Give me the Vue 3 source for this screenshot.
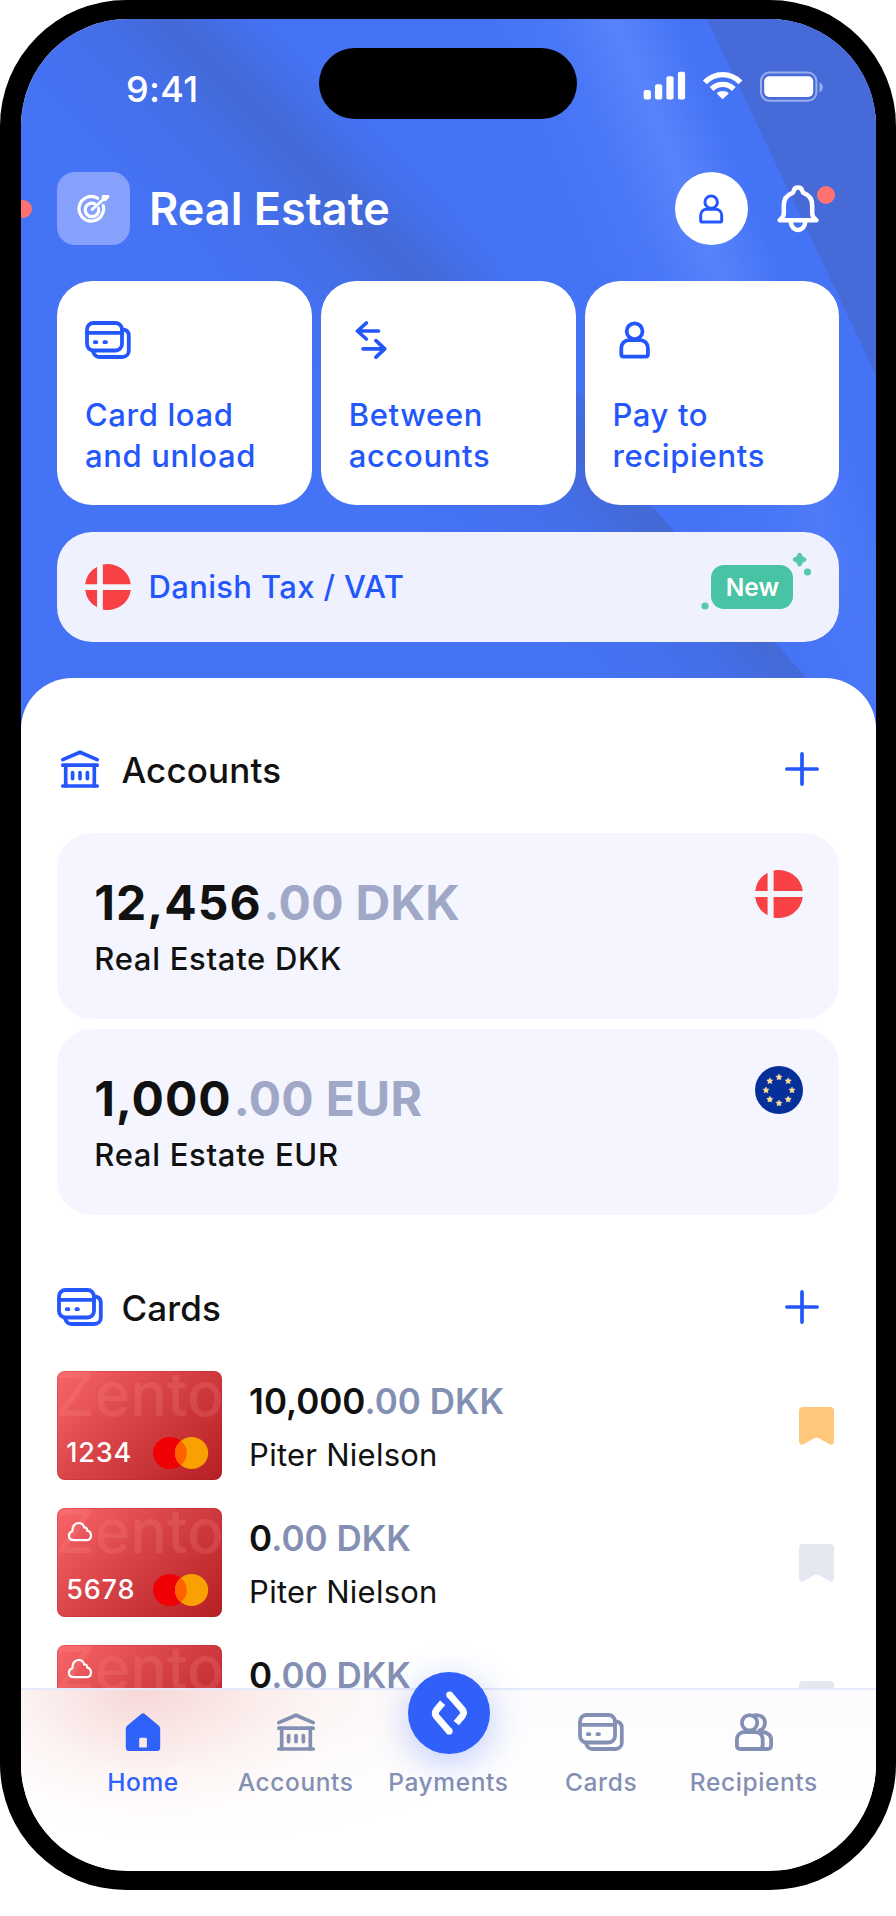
<script setup>
const actions = [
  { icon: 'i-cards', lines: ['Card load', 'and unload'] },
  { icon: 'i-swap', lines: ['Between', 'accounts'] },
  { icon: 'i-person', lines: ['Pay to', 'recipients'] },
]

const accounts = [
  { whole: '12,456', rest: '.00 DKK', name: 'Real Estate DKK', flag: 'i-flag-dk' },
  { whole: '1,000', rest: '.00 EUR', name: 'Real Estate EUR', flag: 'i-flag-eu' },
]

const cards = [
  { number: '1234', whole: '10,000', rest: '.00 DKK', owner: 'Piter Nielson', virtual: false, marked: true },
  { number: '5678', whole: '0', rest: '.00 DKK', owner: 'Piter Nielson', virtual: true, marked: false },
  { number: '', whole: '0', rest: '.00 DKK', owner: '', virtual: true, marked: false },
]

const tabs = [
  { label: 'Home', icon: 'i-home', active: true },
  { label: 'Accounts', icon: 'i-bank' },
  { label: 'Payments', fab: true },
  { label: 'Cards', icon: 'i-cards' },
  { label: 'Recipients', icon: 'i-people' },
]

const euStars = Array.from({ length: 8 }, (_, i) => {
  const a = (i * Math.PI) / 4
  return `translate(${24 + 13 * Math.sin(a)} ${24 - 13 * Math.cos(a)})`
})
</script>

<template>
  <div class="phone">
    <svg class="defs" width="0" height="0">
      <symbol id="i-cards" viewBox="0 0 46 38">
        <g fill="none" stroke="currentColor" stroke-width="3.8" stroke-linecap="round">
          <rect x="2" y="2" width="35" height="27.5" rx="6.5" />
          <path d="M2 11.8H37" />
          <path d="M39 8.6C42 9.4 43.8 11.6 43.8 14.5V29.5C43.8 33.3 41 36 37.2 36H15C11.5 36 9.2 34.2 8.2 31" />
          <path d="M9.8 21.2H11.4M19.4 21.2H21" />
        </g>
      </symbol>
      <symbol id="i-swap" viewBox="0 0 46 38">
        <g fill="none" stroke="currentColor" stroke-width="3.7" stroke-linecap="round" stroke-linejoin="round">
          <path d="M17.3 2L8.5 10L17.3 18M8.5 10H29.5" />
          <path d="M27 19.6L35.7 27.8L27 36.2M35.7 27.8H14" />
        </g>
      </symbol>
      <symbol id="i-person" viewBox="0 0 46 38">
        <g fill="none" stroke="currentColor" stroke-width="3.8" stroke-linejoin="round">
          <circle cx="22.6" cy="10.3" r="7.9" />
          <path d="M17.1 19.2H28.1C32.6 19.2 35.9 22.6 35.9 27V33.5Q35.9 35.6 33.8 35.6H11.4Q9.3 35.6 9.3 33.5V27C9.3 22.6 12.6 19.2 17.1 19.2Z" />
        </g>
      </symbol>
      <symbol id="i-people" viewBox="0 0 46 38">
        <g fill="none" stroke="currentColor" stroke-width="3.8" stroke-linejoin="round">
          <circle cx="18.6" cy="9.8" r="7.7" />
          <path d="M14 19H24C28.7 19 31.7 22.2 31.7 26.5V32.5Q31.7 36 28.2 36H9.4Q5.9 36 5.9 32.5V26.5C5.9 22.2 9 19 14 19Z" />
          <path d="M22 2.5C28.5 0.8 34 4.3 34 9.8C34 14 31.2 17.2 27 17.8" />
          <path d="M27 19H31C36.5 19 40.1 22.4 40.1 26.8V32.5Q40.1 36 36.6 36H29" />
        </g>
      </symbol>
      <symbol id="i-bank" viewBox="0 0 46 38">
        <g fill="none" stroke="currentColor" stroke-width="3.7" stroke-linecap="round" stroke-linejoin="round">
          <path d="M5.8 9.6L23 2.2L40.2 9.6" />
          <path d="M5.8 15.2H40.2M5.8 36H40.2" />
          <path d="M8.7 15.2V36M37.3 15.2V36" />
          <path d="M15.6 22.6V28.6M23 22.6V28.6M30.4 22.6V28.6" />
        </g>
      </symbol>
      <symbol id="i-home" viewBox="0 0 46 38">
        <path fill="currentColor" fill-rule="evenodd" d="M21.2 0.9Q23 -0.5 24.8 0.9L38.6 12.4Q40.2 13.8 40.2 16V34.4Q40.2 38 36.6 38H9.4Q5.8 38 5.8 34.4V16Q5.8 13.8 7.4 12.4ZM20.6 24.8Q19.2 24.8 19.2 26.2V34.6H26.9V26.2Q26.9 24.8 25.5 24.8Z" />
      </symbol>
      <symbol id="i-flag-dk" viewBox="0 0 48 48">
        <circle cx="24" cy="24" r="24" fill="#f2f5fa" />
        <path fill="#f84144" d="M12.6 2.8V21H0.2A24 24 0 0 1 12.6 2.8ZM18.6 0.6A24 24 0 0 1 47.8 21H18.6ZM47.8 27A24 24 0 0 1 18.6 47.4V27ZM12.6 45.2A24 24 0 0 1 0.2 27H12.6Z" />
      </symbol>
      <symbol id="i-flag-eu" viewBox="0 0 48 48">
        <circle cx="24" cy="24" r="24" fill="#05309a" />
        <path
          v-for="t in euStars"
          :key="t"
          :transform="t"
          fill="#ffdf94"
          stroke="#ffdf94"
          stroke-width=".5"
          d="M0 -3L1 -1.1L3.1 -0.8L1.6 0.8L1.9 2.8L0 2L-1.9 2.8L-1.6 0.8L-3.1 -0.8L-1 -1.1Z"
        />
      </symbol>
      <symbol id="i-plus" viewBox="0 0 34 34">
        <path d="M17 1.9V32.1M1.9 17H32.1" fill="none" stroke="currentColor" stroke-width="3.7" stroke-linecap="round" />
      </symbol>
    </svg>

    <div class="screen">
      <svg class="backdrop" width="855" height="720" viewBox="21 19 855 720">
        <defs>
          <linearGradient id="shade" gradientUnits="userSpaceOnUse" x1="276" y1="378" x2="458" y2="203">
            <stop offset="0" stop-color="#4366cb" stop-opacity="0" />
            <stop offset=".3" stop-color="#4366cb" stop-opacity=".16" />
            <stop offset=".5" stop-color="#4366cb" stop-opacity=".38" />
            <stop offset=".66" stop-color="#4366cb" stop-opacity=".74" />
            <stop offset=".72" stop-color="#4366cb" stop-opacity=".68" />
            <stop offset=".85" stop-color="#4366cb" stop-opacity=".28" />
            <stop offset="1" stop-color="#4366cb" stop-opacity="0" />
          </linearGradient>
          <linearGradient id="glow" gradientUnits="userSpaceOnUse" x1="542" y1="173" x2="758" y2="85">
            <stop offset="0" stop-color="#6690ff" stop-opacity="0" />
            <stop offset=".3" stop-color="#6690ff" stop-opacity=".18" />
            <stop offset=".54" stop-color="#6690ff" stop-opacity=".58" />
            <stop offset=".8" stop-color="#6690ff" stop-opacity="0" />
          </linearGradient>
          <linearGradient id="glowFade" x1="0" y1="0" x2="0" y2="1">
            <stop offset="0" stop-color="#fff" />
            <stop offset=".3" stop-color="#fff" />
            <stop offset=".8" stop-color="#555" />
          </linearGradient>
          <mask id="glowMask"><rect x="21" y="19" width="855" height="720" fill="url(#glowFade)" /></mask>
        </defs>
        <rect x="21" y="19" width="855" height="720" fill="#4573f6" />
        <path d="M21 19H260L470 220L650 504L815 687V740H21Z" fill="url(#shade)" />
        <rect x="21" y="19" width="855" height="720" fill="url(#glow)" mask="url(#glowMask)" />
        <path d="M707 19H876V375Z" fill="#466bd9" />
      </svg>
      <span class="edge-dot"></span>

      <div class="status">
        <span class="time">9:41</span>
        <span class="island"></span>
        <svg class="signals" width="186" height="40" viewBox="0 0 186 40">
          <g fill="#fff">
            <rect x="3.7" y="24" width="7.2" height="9.6" rx="2" />
            <rect x="15" y="18.2" width="7.2" height="15.4" rx="2" />
            <rect x="26.4" y="10.2" width="7.2" height="23.4" rx="2" />
            <rect x="37.9" y="5.8" width="7.2" height="27.8" rx="2" />
            <path d="M82.6 33.2L76.6 27.4C79.8 24.3 85.6 24.3 88.8 27.4Z" />
            <rect x="124.2" y="10.2" width="49" height="20.8" rx="5" />
          </g>
          <g fill="none" stroke="#fff" stroke-width="5.4">
            <path d="M64.8 16.4C74.8 6 90.5 6 100.5 16.4" />
            <path d="M71.6 23C78 16.8 87.4 16.8 93.8 23" />
          </g>
          <rect x="121" y="6.6" width="55.4" height="28.2" rx="8.6" fill="none" stroke="#fff" stroke-opacity=".45" stroke-width="2" />
          <path d="M179.5 16.4C184 18 184 24.6 179.5 26.2Z" fill="#fff" fill-opacity=".45" />
        </svg>
      </div>

      <header class="top">
        <div class="logo">
          <svg width="34" height="32" viewBox="0 0 34 32" fill="none" stroke="#fff" stroke-width="3.2" stroke-linecap="round">
            <path d="M20.6 5.2A12.3 12.3 0 1 0 26.2 12.6" />
            <path d="M17.3 10.5A6.8 6.8 0 1 0 21.6 15.4" />
            <path d="M15.2 16.4L25.6 7M25.6 7L26.4 3.6H31M25.6 7L28.8 6.2L30.6 3.8" stroke-width="3" />
          </svg>
        </div>
        <h1>Real Estate</h1>
        <div class="avatar">
          <svg width="37" height="30"><use href="#i-person" /></svg>
        </div>
        <div class="bell">
          <svg width="42" height="48" viewBox="0 0 42 48" fill="none" stroke="#fff" stroke-width="4.5" stroke-linejoin="round" stroke-linecap="round">
            <path d="M2.6 35.2C5.2 33.2 6.8 31.4 6.8 28.5V20.5C6.8 14.5 9.6 10.3 14.6 8.4C16.4 7.7 16.6 7.3 16.8 5.8C17.5 1.4 24.5 1.4 25.2 5.8C25.4 7.3 25.6 7.7 27.4 8.4C32.4 10.3 35.2 14.5 35.2 20.5V28.5C35.2 31.4 36.8 33.2 39.4 35.2Z" />
            <path d="M13.8 37C14.4 47.6 27.6 47.6 28.2 37" />
          </svg>
          <span class="bell-dot"></span>
        </div>
      </header>

      <div class="actions">
        <div v-for="a in actions" :key="a.icon" class="action">
          <svg width="46" height="38"><use :href="'#' + a.icon" /></svg>
          <p>{{ a.lines[0] }}<br />{{ a.lines[1] }}</p>
        </div>
      </div>

      <div class="tax">
        <svg width="46" height="46"><use href="#i-flag-dk" /></svg>
        <span class="tax-label">Danish Tax / VAT</span>
        <span class="badge">
          New
          <svg class="sparks" width="112" height="60" viewBox="0 0 112 60" fill="#58c8ad">
            <path d="M97.6 1.9Q99.6 -0.6 101.6 1.9C102.4 4.2 103 4.8 105.3 5.6Q107.8 7.6 105.3 9.6C103 10.4 102.4 11 101.6 13.3Q99.6 15.8 97.6 13.3C96.8 11 96.2 10.4 93.9 9.6Q91.4 7.6 93.9 5.6C96.2 4.8 96.8 4.2 97.6 1.9Z" />
            <circle cx="107.5" cy="20" r="3.6" />
            <circle cx="5" cy="54" r="3.6" />
          </svg>
        </span>
      </div>

      <main class="sheet">
        <div class="section">
          <svg width="46" height="38"><use href="#i-bank" /></svg>
          <h2>Accounts</h2>
          <svg class="plus" width="34" height="34"><use href="#i-plus" /></svg>
        </div>
        <div class="accounts">
          <div v-for="a in accounts" :key="a.name" class="account">
            <div>
              <div class="balance">{{ a.whole }}<span>{{ a.rest }}</span></div>
              <div class="account-name">{{ a.name }}</div>
            </div>
            <svg width="48" height="48"><use :href="'#' + a.flag" /></svg>
          </div>
        </div>

        <div class="section cards-head">
          <svg width="46" height="38"><use href="#i-cards" /></svg>
          <h2>Cards</h2>
          <svg class="plus" width="34" height="34"><use href="#i-plus" /></svg>
        </div>
        <div class="cards">
          <div v-for="(c, i) in cards" :key="i" class="card-row">
            <div class="card">
              <span class="brand">Zento</span>
              <svg v-if="c.virtual" class="cloud" width="26" height="22" viewBox="0 0 26 22">
                <path
                  d="M7.2 19.2C4 19.2 1.9 17.6 1.9 14.8C1.9 12.4 3.4 10.8 5.4 10.3C5.2 5.2 7.6 2 11.6 2C14.8 2 16.6 3.6 17.2 6.4C19.4 6.4 20.4 7.6 20.2 9.6C22.8 10.2 24 12 24 14.4C24 17.4 22 19.2 18.8 19.2Z"
                  fill="none" stroke="#fff" stroke-width="2.2" stroke-linejoin="round"
                />
              </svg>
              <span v-if="c.number" class="number">{{ c.number }}</span>
              <svg class="network" width="56" height="32" viewBox="0 0 56 32">
                <ellipse cx="17" cy="16" rx="17" ry="16" fill="#ee0005" />
                <ellipse cx="38.6" cy="16" rx="16.6" ry="16" fill="#faa000" />
                <path d="M27.8 3.8A17 16 0 0 1 27.8 28.2A16.6 16 0 0 1 27.8 3.8Z" fill="#ff6100" />
              </svg>
            </div>
            <div class="card-text">
              <div class="card-sum">{{ c.whole }}<span>{{ c.rest }}</span></div>
              <div v-if="c.owner" class="owner">{{ c.owner }}</div>
            </div>
            <svg class="mark" :class="{ on: c.marked }" width="35" height="38" viewBox="0 0 35 38">
              <path fill="currentColor" d="M4 0H31Q35 0 35 4V34.5Q34.5 38.8 30.5 37.2L19.5 31Q17.5 30 15.5 31L4.5 37.2Q0.5 38.8 0 34.5V4Q0 0 4 0Z" />
            </svg>
          </div>
        </div>
      </main>

      <nav class="tabs">
        <div v-for="t in tabs" :key="t.label" class="tab" :class="{ active: t.active }">
          <span v-if="t.fab" class="fab">
            <svg width="40" height="48" viewBox="0 0 40 48" fill="none" stroke="#fff" stroke-width="6.8">
              <path d="M20.6 5.8L33.4 20.6Q35.7 23.7 33.4 26.8L27.3 34.2" />
              <path d="M13.6 13.8L7.4 21.2Q5.1 24.3 7.4 27.4L20.2 42.2" />
              <g fill="#fff" stroke="none"><circle cx="20.6" cy="5.8" r="3.4" /><circle cx="20.2" cy="42.2" r="3.4" /></g>
            </svg>
          </span>
          <span v-if="t.fab" class="fab-space"></span>
          <svg v-else width="46" height="38"><use :href="'#' + t.icon" /></svg>
          <span class="tab-label">{{ t.label }}</span>
        </div>
      </nav>
    </div>
  </div>
</template>

<style>
html,
body {
  background: #fff;
}
</style>

<style scoped>
.phone {
  width: 896px;
  height: 1890px;
  box-sizing: border-box;
  padding: 19px 20px 19px 21px;
  background: #000;
  border-radius: 126px;
  font-family: Inter, 'Liberation Sans', sans-serif;
}
.phone svg {
  display: block;
  flex: none;
}
.phone .defs {
  position: absolute;
}
.screen {
  position: relative;
  height: 1852px;
  overflow: hidden;
  border-radius: 107px;
  background: #fff;
  isolation: isolate;
}
.backdrop {
  position: absolute;
  inset: 0;
  z-index: -1;
}
.edge-dot {
  position: absolute;
  left: -7px;
  top: 181px;
  width: 18px;
  height: 18px;
  border-radius: 50%;
  background: #ff7271;
}
.status {
  display: flex;
  align-items: center;
  height: 129px;
}
.time {
  width: 193px;
  padding: 11px 0 0 105px;
  box-sizing: content-box;
  font-size: 36px;
  font-weight: 550;
  letter-spacing: 0.3px;
  color: #fff;
}
.island {
  width: 258px;
  height: 71px;
  flex: none;
  border-radius: 36px;
  background: #000;
}
.signals {
  margin: 5px 0 0 63px;
}
.top {
  display: flex;
  align-items: center;
  height: 73px;
  margin: 24px 36px 0 36.4px;
}
.logo {
  display: grid;
  place-items: center;
  width: 73px;
  height: 73px;
  border-radius: 18px;
  background: #86a1fc;
}
h1 {
  margin: 0 auto 0 18.6px;
  font-size: 45px;
  line-height: 56px;
  font-weight: 600;
  color: #fff;
}
.avatar {
  display: grid;
  place-items: center;
  width: 73px;
  height: 73px;
  border-radius: 50%;
  background: #fff;
  color: #2457fb;
}
.bell {
  position: relative;
  margin: 0 21px 0 29px;
}
.bell-dot {
  position: absolute;
  left: 40px;
  top: 1px;
  width: 18px;
  height: 18px;
  border-radius: 50%;
  background: #ff7271;
}
.actions {
  display: grid;
  grid-template-columns: repeat(3, 1fr);
  gap: 9px;
  margin: 36.4px 36.6px 0 36.3px;
}
.action {
  height: 223.6px;
  box-sizing: border-box;
  padding: 40px 0 0 27.7px;
  border-radius: 35px;
  background: #fff;
  color: #2457fb;
}
.action p {
  margin: 35px 0 0;
  font-size: 31px;
  line-height: 41px;
  font-weight: 550;
  letter-spacing: 0.65px;
  white-space: nowrap;
}
.tax {
  display: flex;
  align-items: center;
  height: 110px;
  margin: 27px 36.6px 0 36.3px;
  padding: 0 46px 0 27.7px;
  border-radius: 35px;
  background: #eff1ff;
}
.tax-label {
  margin: 0 auto 0 17.5px;
  font-size: 31px;
  font-weight: 550;
  letter-spacing: 0.35px;
  color: #2457fb;
}
.badge {
  position: relative;
  width: 82px;
  height: 44px;
  border-radius: 13px;
  background: #49c3a5;
  color: #fff;
  font-size: 24.5px;
  line-height: 44px;
  font-weight: 600;
  text-align: center;
}
.badge .sparks {
  position: absolute;
  left: -11px;
  top: -13px;
}
.sheet {
  height: 1010px;
  margin-top: 36px;
  box-sizing: border-box;
  padding: 61.4px 36.6px 0 36.3px;
  overflow: hidden;
  border-radius: 51px 51px 0 0;
  background: #fff;
}
.section {
  display: flex;
  align-items: center;
  height: 60px;
  color: #2457fb;
}
.section svg:first-child {
  margin-left: -0.4px;
}
.section h2 {
  margin: 1px auto 0 18.5px;
  font-size: 35px;
  font-weight: 550;
  letter-spacing: 0.15px;
  color: #111;
}
.plus {
  margin-right: 20px;
}
.accounts {
  display: grid;
  gap: 9.5px;
  margin-top: 33.6px;
}
.account {
  display: flex;
  justify-content: space-between;
  height: 186.5px;
  box-sizing: border-box;
  padding: 37px 36.6px 0 37px;
  border-radius: 35px;
  background: #f4f5fe;
  color: #111;
}
.balance {
  margin-top: 5px;
  font-size: 48px;
  line-height: 56px;
  font-weight: 670;
  letter-spacing: 1px;
}
.balance span {
  margin-left: 2px;
  color: #9fa8c7;
  letter-spacing: 0.3px;
}
.account-name {
  margin-top: 8px;
  font-size: 31px;
  line-height: 40px;
  font-weight: 550;
  letter-spacing: 0.7px;
}
.cards-head {
  margin-top: 62px;
}
.cards {
  display: grid;
  gap: 27.5px;
  margin-top: 33.4px;
}
.card-row {
  display: flex;
  height: 109.5px;
}
.card {
  position: relative;
  width: 164.5px;
  height: 109.5px;
  overflow: hidden;
  border-radius: 8px;
  background: linear-gradient(135deg, #f96669 0%, #d94548 42%, #b51f23 100%);
  box-shadow: inset 0 0 0 1px rgba(180, 30, 40, 0.25);
}
.brand {
  position: absolute;
  left: -2px;
  top: -13px;
  font-size: 61px;
  line-height: 73px;
  font-weight: 550;
  letter-spacing: 0;
  color: rgba(255, 150, 150, 0.19);
}
.cloud {
  position: absolute;
  left: 10px;
  top: 13px;
}
.number {
  position: absolute;
  left: 9px;
  bottom: 9px;
  font-size: 27px;
  line-height: 36px;
  font-weight: 500;
  letter-spacing: 0.8px;
  color: #fff;
}
.network {
  position: absolute;
  left: 95.5px;
  top: 66px;
}
.card-text {
  margin: 3px auto 0 27.3px;
  line-height: 54px;
  color: #111;
}
.card-sum {
  font-size: 35px;
  font-weight: 600;
}
.card-sum span {
  color: #8490b3;
}
.owner {
  font-size: 31px;
  letter-spacing: 0.25px;
}
.mark {
  margin: 35.7px 5.2px 0 0;
  color: #e4e8f0;
}
.mark.on {
  color: #ffc77b;
}
.tabs {
  display: flex;
  position: relative;
  height: 182px;
  box-sizing: border-box;
  padding: 23px 0 0 45.7px;
  border-top: 2px solid #e5e9fc;
  background:
    radial-gradient(ellipse 190px 135px at 118px 0, rgba(243, 200, 200, 0.62), rgba(246, 208, 208, 0.42) 30%, rgba(250, 222, 222, 0.18) 65%, rgba(255, 255, 255, 0)),
    radial-gradient(ellipse 340px 150px at 180px 0, rgba(250, 234, 230, 0.8), rgba(253, 245, 243, 0.4) 55%, rgba(255, 255, 255, 0)),
    linear-gradient(#fcfcfe, #fff 60%);
}
.tab {
  position: relative;
  display: flex;
  flex-direction: column;
  align-items: center;
  width: 152.7px;
  color: #8490b3;
}
.tab.active {
  color: #2f62fb;
}
.tab-label {
  margin-top: 16px;
  font-size: 24.5px;
  line-height: 30px;
  font-weight: 550;
  letter-spacing: 0.6px;
}
.fab-space {
  height: 38px;
}
.fab {
  position: absolute;
  left: 36px;
  top: -41px;
  display: grid;
  place-items: center;
  width: 82px;
  height: 82px;
  border-radius: 50%;
  background: #315ffa;
  box-shadow: 0 9px 36px rgba(60, 100, 250, 0.32);
}
</style>
